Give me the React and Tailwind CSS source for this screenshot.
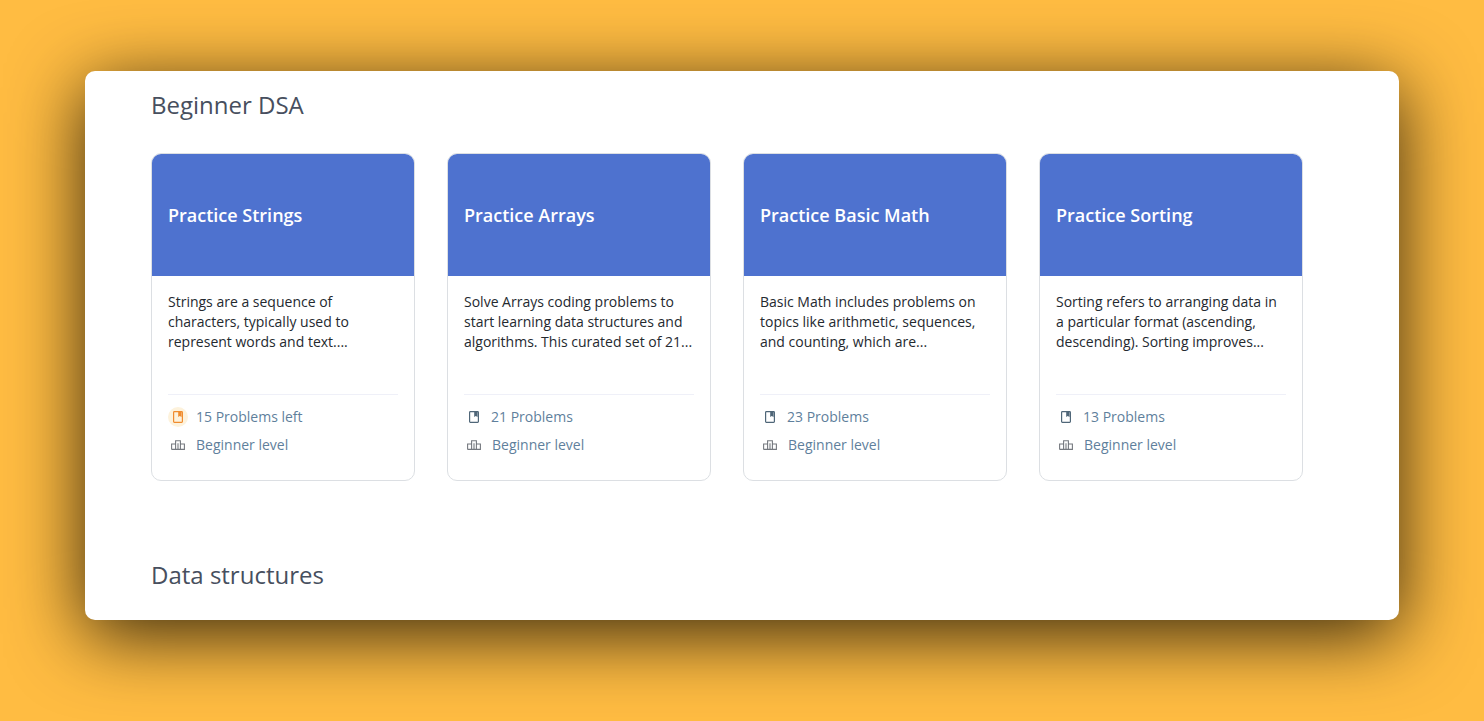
const cards = [
  { t: "Practice Strings", d: ["Strings are a sequence of", "characters, typically used to", "represent words and text...."], p: "15 Problems left", active: true },
  { t: "Practice Arrays", d: ["Solve Arrays coding problems to", "start learning data structures and", "algorithms. This curated set of 21..."], p: "21 Problems" },
  { t: "Practice Basic Math", d: ["Basic Math includes problems on", "topics like arithmetic, sequences,", "and counting, which are..."], p: "23 Problems" },
  { t: "Practice Sorting", d: ["Sorting refers to arranging data in", "a particular format (ascending,", "descending). Sorting improves..."], p: "13 Problems" },
];

function BookIcon({ color }) {
  return (
    <svg width="10" height="12" viewBox="0 0 10 12" fill="none" className="block">
      <rect x="0.6" y="0.6" width="8.8" height="10.8" rx="0.8" stroke={color} strokeWidth="1.2" />
      <path d="M5.2 1V6L6.7 5L8.6 6V1Z" fill={color} />
    </svg>
  );
}

function LevelIcon() {
  return (
    <svg width="14" height="10" viewBox="0 0 14 10" fill="none" className="block">
      <path d="M0.6 9.4V4H4.6V9.4M4.6 9.4V0.8H9.4V9.4M9.4 4H13.4V9.4H0.6M7 3.2V9.4" stroke="#75797f" strokeWidth="1.1" />
    </svg>
  );
}

function Card({ c }) {
  return (
    <div className="w-[264px] h-[328px] shrink-0 flex flex-col rounded-[10px] border border-[#dcdfe3] bg-white overflow-hidden">
      <div className="h-[122px] shrink-0 bg-[#4e72cf] flex items-center px-4">
        <h3 className="text-[18px] leading-[26px] font-semibold text-white">{c.t}</h3>
      </div>
      <div className="flex-1 flex flex-col px-4 pt-4">
        <p className="h-[103px] border-b border-[#eff0f8] text-[14px] leading-[20px] text-[#24292f]">
          {c.d.map((l) => <span key={l} className="block whitespace-nowrap">{l}</span>)}
        </p>
        <div className="pt-[12px] flex flex-col gap-[8px] text-[14px] leading-[20px] text-[#5f7f9c]">
          <div className="flex items-center h-[20px]">
            {c.active ? (
              <span className="w-5 h-5 mr-[8px] rounded-full bg-[#fdf2dc] flex items-center justify-center"><BookIcon color="#f08c2e" /></span>
            ) : (
              <span className="w-5 h-5 mr-[7px] flex items-center justify-center"><BookIcon color="#4f6678" /></span>
            )}
            <span>{c.p}</span>
          </div>
          <div className="flex items-center h-[20px]">
            <span className="w-5 h-5 mr-[8px] flex items-center justify-center"><LevelIcon /></span>
            <span>Beginner level</span>
          </div>
        </div>
      </div>
    </div>
  );
}

export default function App() {
  return (
    <div className="h-[721px] bg-[#ffbc42] px-[85px] pt-[71px] overflow-hidden" style={{ fontFamily: '"Open Sans", sans-serif' }}>
      <div className="h-[549px] rounded-[10px] bg-white overflow-hidden shadow-[0_15px_75px_rgba(0,0,0,0.8)] pl-[66px] pt-[16px]">
        <h2 className="text-[24px] leading-[36px] text-[#474f5e]">Beginner DSA</h2>
        <div className="flex gap-[32px] mt-[30px]">
          {cards.map((c) => <Card key={c.t} c={c} />)}
        </div>
        <h2 className="text-[24px] leading-[36px] text-[#474f5e] mt-[76px]">Data structures</h2>
      </div>
    </div>
  );
}
